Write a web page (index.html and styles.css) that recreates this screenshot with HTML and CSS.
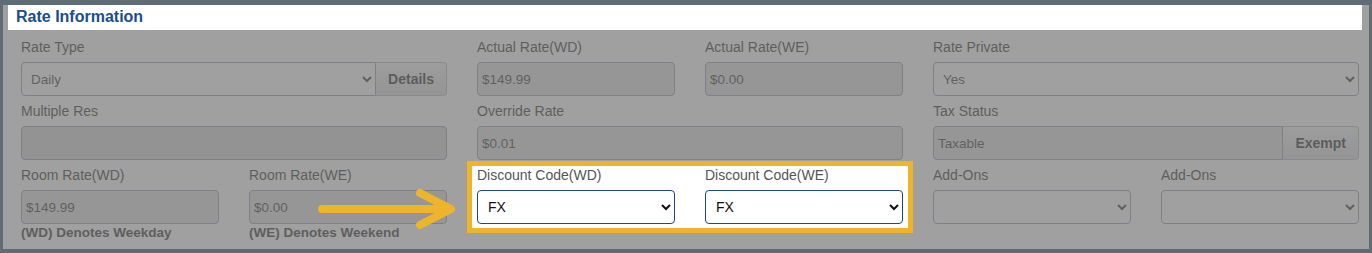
FILE: index.html
```html
<!DOCTYPE html>
<html lang="en">

<head>
    <meta charset="UTF-8">
    <title>Rate Information</title>

    <link rel="stylesheet" href="styles.css">

</head>

<body>

    <section class="panel">
        <h2 class="panel-title">Rate Information</h2>

        <div class="rate-grid">
            <div class="field span-2">
                <label>Rate Type</label>
                <div class="input-group">
                    <select class="control"><option>Daily</option></select>
                    <button class="addon">Details</button>
                </div>
            </div>
            <div class="field">
                <label>Actual Rate(WD)</label>
                <input class="control" type="text" value="$149.99" readonly>
            </div>
            <div class="field">
                <label>Actual Rate(WE)</label>
                <input class="control" type="text" value="$0.00" readonly>
            </div>
            <div class="field span-2">
                <label>Rate Private</label>
                <select class="control"><option>Yes</option></select>
            </div>

            <div class="field span-2">
                <label>Multiple Res</label>
                <input class="control empty" type="text" value="" readonly>
            </div>
            <div class="field span-2">
                <label>Override Rate</label>
                <input class="control" type="text" value="$0.01" readonly>
            </div>
            <div class="field span-2">
                <label>Tax Status</label>
                <div class="input-group">
                    <input class="control" type="text" value="Taxable" readonly>
                    <button class="addon">Exempt</button>
                </div>
            </div>

            <div class="field">
                <label>Room Rate(WD)</label>
                <input class="control" type="text" value="$149.99" readonly>
                <p class="note">(WD) Denotes Weekday</p>
            </div>
            <div class="field">
                <label>Room Rate(WE)</label>
                <input class="control" type="text" value="$0.00" readonly>
                <p class="note">(WE) Denotes Weekend</p>
            </div>
            <div class="spotlight span-2">
                <div class="field">
                    <label>Discount Code(WD)</label>
                    <select class="control"><option>FX</option></select>
                </div>
                <div class="field">
                    <label>Discount Code(WE)</label>
                    <select class="control"><option>FX</option></select>
                </div>
            </div>
            <div class="field">
                <label>Add-Ons</label>
                <select class="control"><option></option></select>
            </div>
            <div class="field">
                <label>Add-Ons</label>
                <select class="control"><option></option></select>
            </div>
        </div>

        <div class="dim"></div>

        <svg class="pointer" width="150" height="44" viewBox="0 0 150 44">
            <path d="M4 21 H132 M102 5 L133 21 L102 37" />
        </svg>
    </section>

</body>

</html>
```

FILE: styles.css
```css
html {
    background: #5d6c75;
}

body {
    margin: 0;
    font-family: "Liberation Sans", Arial, sans-serif;
}

.panel {
    position: relative;
    margin: 5px 3px 4px 3px;
    padding: 0 10px 9px 18px;
    background: #fff;
}

.panel-title {
    position: relative;
    z-index: 2;
    margin: 0 -3px 0 -13px;
    height: 25px;
    padding-left: 8px;
    background: #fff;
    color: #1a4e8c;
    font-size: 16px;
    line-height: 23px;
}

.rate-grid {
    display: grid;
    grid-template-columns: repeat(6, 1fr);
    column-gap: 30px;
    row-gap: 7px;
    align-items: start;
    margin-top: 9px;
}

.span-2 {
    grid-column: span 2;
}

.field label {
    display: block;
    margin-bottom: 7px;
    color: #222;
    font-size: 14px;
    line-height: 16px;
}

.control {
    display: block;
    box-sizing: border-box;
    width: 100%;
    height: 34px;
    margin: 0;
    padding: 0 4px;
    border: 1px solid #8f95ab;
    border-radius: 4px;
    background: #dedede;
    color: #2a2a2a;
    font-family: inherit;
    font-size: 13.5px;
}

select.control {
    padding-left: 5px;
    background: #fff;
}

.control.empty {
    background: #d2d2d2;
}

.input-group {
    display: flex;
}

.input-group .control {
    flex: 1;
    border-radius: 4px 0 0 4px;
}

.addon {
    flex: none;
    height: 34px;
    padding: 0 12px;
    border: 1px solid #b0b4c0;
    border-left: 0;
    border-radius: 0 4px 4px 0;
    background: linear-gradient(#f4f4f4, #d8d8d8);
    color: #1a1a1a;
    font-family: inherit;
    font-size: 14px;
    font-weight: bold;
}

.note {
    margin: 1px 0 0;
    color: #222;
    font-size: 13.5px;
    font-weight: bold;
    line-height: 15px;
}

.dim {
    position: absolute;
    inset: 0;
    z-index: 1;
    background: rgba(120, 120, 120, 0.7);
    backdrop-filter: blur(0.7px);
}

.spotlight {
    position: relative;
    z-index: 2;
    display: grid;
    grid-template-columns: 1fr 1fr;
    column-gap: 30px;
    margin: -6px -10px 0;
    padding: 1px 5px 4px;
    border: 5px solid #eeb52a;
    background: #fff;
}

.spotlight label {
    color: #555;
}

.spotlight .control {
    padding-left: 6px;
    border-color: #1f4688;
    color: #111;
    font-size: 14px;
}

.pointer {
    position: absolute;
    z-index: 3;
    left: 315px;
    top: 183px;
    fill: none;
    stroke: #eeb52a;
    stroke-width: 8;
    stroke-linecap: round;
    stroke-linejoin: round;
}
```
